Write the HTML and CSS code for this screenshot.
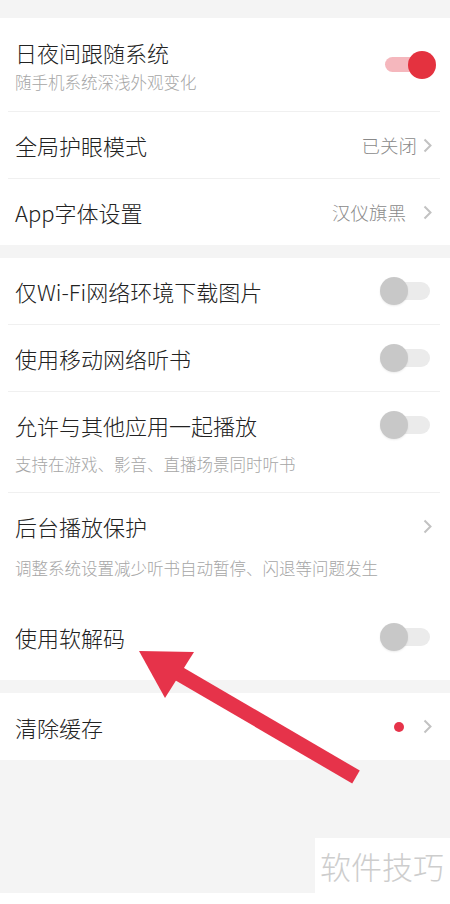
FILE: index.html
```html
<!DOCTYPE html>
<html lang="zh-CN">
<head>
    <meta charset="UTF-8">
    <meta name="viewport" content="width=device-width, initial-scale=1.0">
    <title>设置</title>
    <link rel="stylesheet" href="styles.css">
</head>
<body>
    <div class="page">
        <div class="card">
            <div class="row row-center row-night">
                <div class="row-text">
                    <div class="title">日夜间跟随系统</div>
                    <div class="sub sub-night">随手机系统深浅外观变化</div>
                </div>
                <div class="toggle on"><span class="track"></span><span class="knob"></span></div>
            </div>
            <div class="divider"></div>
            <div class="row row-simple">
                <div class="title">全局护眼模式</div>
                <div class="side">
                    <span class="value">已关闭</span>
                    <svg class="chevron" width="9" height="15" viewBox="0 0 9 15"><polyline points="1.5,1.5 7.5,7.5 1.5,13.5" fill="none" stroke="#c2c2c2" stroke-width="2"/></svg>
                </div>
            </div>
            <div class="divider"></div>
            <div class="row row-simple row-last">
                <div class="title">App字体设置</div>
                <div class="side">
                    <span class="value value-font">汉仪旗黑</span>
                    <svg class="chevron" width="9" height="15" viewBox="0 0 9 15"><polyline points="1.5,1.5 7.5,7.5 1.5,13.5" fill="none" stroke="#c2c2c2" stroke-width="2"/></svg>
                </div>
            </div>
        </div>

        <div class="card">
            <div class="row row-simple">
                <div class="title">仅Wi-Fi网络环境下载图片</div>
                <div class="toggle"><span class="track"></span><span class="knob"></span></div>
            </div>
            <div class="divider"></div>
            <div class="row row-simple">
                <div class="title">使用移动网络听书</div>
                <div class="toggle"><span class="track"></span><span class="knob"></span></div>
            </div>
            <div class="divider"></div>
            <div class="row row-stack row-mix">
                <div class="row-main">
                    <div class="title">允许与其他应用一起播放</div>
                    <div class="toggle"><span class="track"></span><span class="knob"></span></div>
                </div>
                <div class="sub sub-mix">支持在游戏、影音、直播场景同时听书</div>
            </div>
            <div class="divider"></div>
            <div class="row row-stack row-bg">
                <div class="row-main">
                    <div class="title">后台播放保护</div>
                    <svg class="chevron" width="9" height="15" viewBox="0 0 9 15"><polyline points="1.5,1.5 7.5,7.5 1.5,13.5" fill="none" stroke="#c2c2c2" stroke-width="2"/></svg>
                </div>
                <div class="sub sub-bg">调整系统设置减少听书自动暂停、闪退等问题发生</div>
            </div>
            <div class="row row-stack row-decode">
                <div class="row-main">
                    <div class="title">使用软解码</div>
                    <div class="toggle"><span class="track"></span><span class="knob"></span></div>
                </div>
            </div>
        </div>

        <div class="card">
            <div class="row row-simple row-cache">
                <div class="title">清除缓存</div>
                <div class="side">
                    <span class="dot"></span>
                    <svg class="chevron" width="9" height="15" viewBox="0 0 9 15"><polyline points="1.5,1.5 7.5,7.5 1.5,13.5" fill="none" stroke="#c2c2c2" stroke-width="2"/></svg>
                </div>
            </div>
        </div>

        <div class="spacer"></div>
        <div class="mark-row">
            <div class="mark">软件技巧</div>
        </div>
    </div>

    <svg class="arrow" width="450" height="904" viewBox="0 0 450 904">
        <line x1="176" y1="672" x2="356" y2="777" stroke="#e6334a" stroke-width="15"/>
        <polygon points="139,651 194,652 165,698" fill="#e6334a"/>
    </svg>
</body>
</html>
```

FILE: styles.css
```css
body {
    margin: 0;
    width: 450px;
    height: 904px;
    overflow: hidden;
    background-color: #ffffff;
    font-family: "Noto Sans CJK SC", "Noto Sans", sans-serif;
    font-weight: 300;
    color: #222222;
    position: relative;
}

.page {
    background-color: #f4f4f4;
    padding-top: 18px;
    display: flex;
    flex-direction: column;
    gap: 13px;
}

.card {
    background-color: #ffffff;
}

.row {
    padding: 0 14px 0 15px;
}

.row-simple {
    height: 66px;
    display: flex;
    align-items: center;
    justify-content: space-between;
}

.row-last {
    height: 66px;
}

.row-cache {
    height: 67px;
}

.row-center {
    display: flex;
    align-items: center;
    justify-content: space-between;
}

.row-night {
    padding-top: 19px;
    padding-bottom: 18px;
}

.row-stack {
    padding-top: 18px;
}

.row-main {
    display: flex;
    align-items: center;
    justify-content: space-between;
    height: 30px;
}

.row-mix {
    padding-bottom: 17px;
}

.row-bg {
    padding-bottom: 25px;
}

.row-decode {
    padding-bottom: 28px;
}

.title {
    font-size: 22px;
    line-height: 30px;
    color: #222222;
}

.sub {
    font-size: 16.5px;
    line-height: 22px;
    color: #a6a6a6;
}

.sub-night {
    margin-top: 4px;
}

.sub-mix {
    margin-top: 13px;
}

.sub-bg {
    margin-top: 16px;
}

.divider {
    height: 1px;
    background-color: #f0f0f0;
    margin: 0 10px 0 8px;
}

.side {
    display: flex;
    align-items: center;
}

.value {
    font-size: 18.5px;
    color: #8a8a8a;
    margin-right: 6px;
}

.value-font {
    margin-right: 17px;
}

.chevron {
    display: block;
    margin-right: 4px;
}

.dot {
    width: 10px;
    height: 10px;
    border-radius: 50%;
    background-color: #e6334a;
    margin-right: 19px;
}

.toggle {
    position: relative;
    width: 56px;
    height: 28px;
    flex-shrink: 0;
}

.toggle .track {
    position: absolute;
    left: 5px;
    right: 6px;
    top: 5px;
    height: 18px;
    border-radius: 9px;
    background-color: #ebebeb;
}

.toggle .knob {
    position: absolute;
    left: 0;
    top: 0;
    width: 28px;
    height: 28px;
    border-radius: 50%;
    background-color: #c8c8c8;
    box-shadow: 0 1px 2px rgba(0, 0, 0, 0.08);
}

.toggle.on .track {
    top: 6px;
    height: 15px;
    border-radius: 8px;
    background-color: #f5b7bd;
}

.toggle.on .knob {
    left: auto;
    right: 0;
    background-color: #e4323f;
    box-shadow: none;
}

.spacer {
    height: 52px;
}

.mark-row {
    display: flex;
    justify-content: flex-end;
}

.mark {
    width: 135px;
    height: 55px;
    background-color: #ffffff;
    font-size: 31px;
    line-height: 55px;
    color: #cdcdcd;
    padding-left: 5px;
    box-sizing: border-box;
}

.arrow {
    position: absolute;
    left: 0;
    top: 0;
    pointer-events: none;
}
```
